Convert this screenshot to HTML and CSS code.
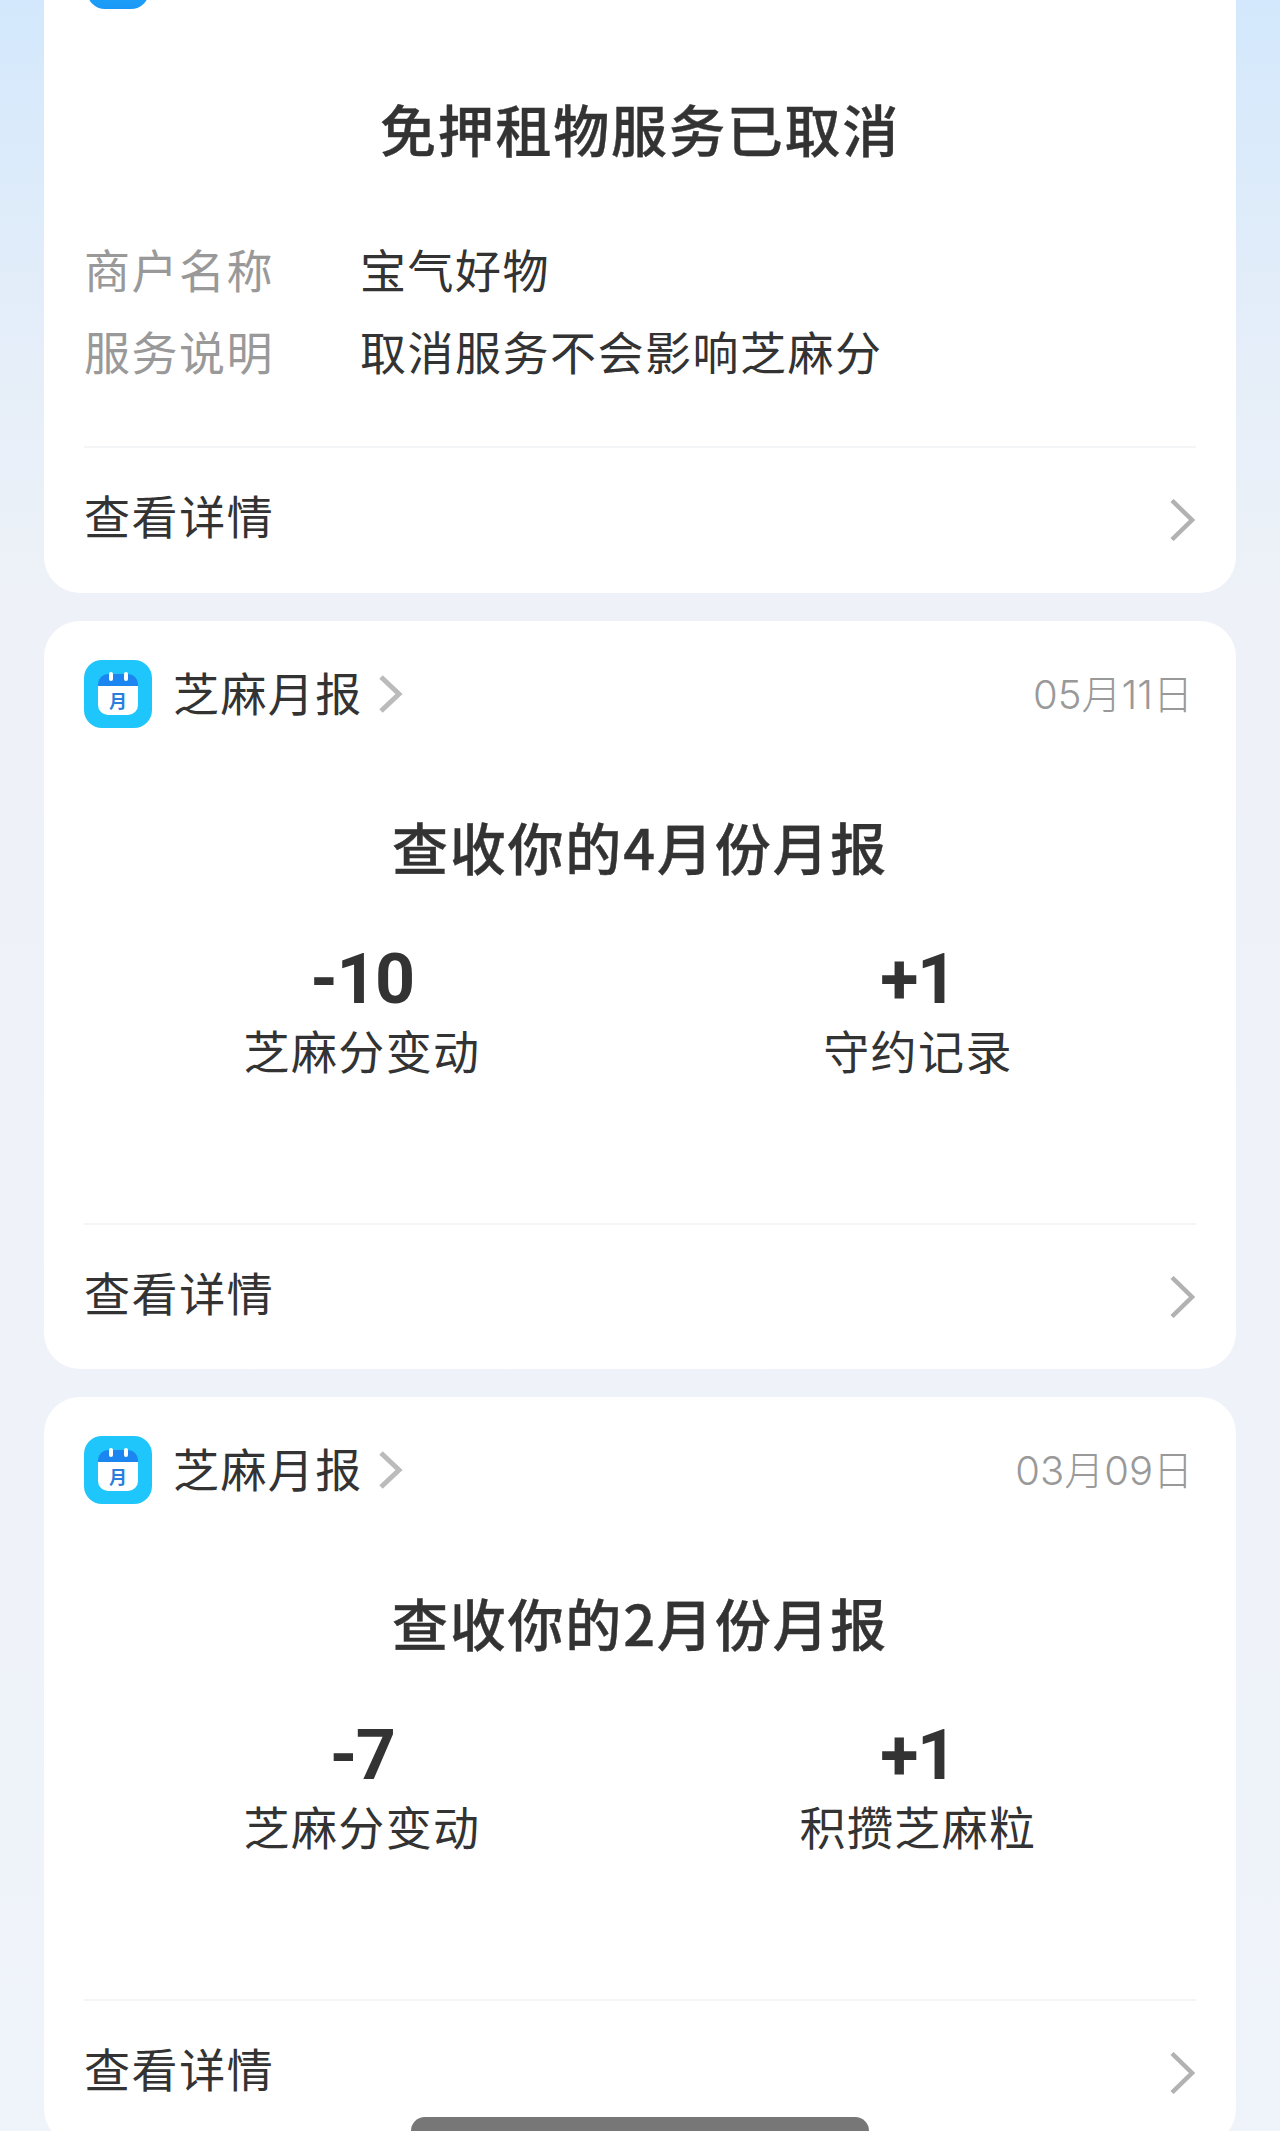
FILE: index.html
```
<!DOCTYPE html>
<html lang="zh-CN">
<head>
<meta charset="utf-8">
<title>芝麻信用</title>
<link rel="stylesheet" href="styles.css">
</head>
<body>
<main class="feed">
  <section class="card card-first">
    <header class="head"><div class="app-icon app-icon-top"></div></header>
    <h2 class="title title-first">免押租物服务已取消</h2>
    <dl class="info">
      <div class="info-row"><dt>商户名称</dt><dd>宝气好物</dd></div>
      <div class="info-row"><dt>服务说明</dt><dd>取消服务不会影响芝麻分</dd></div>
    </dl>
    <a class="detail"><span>查看详情</span>
      <svg class="chev" viewBox="0 0 26 42"><path d="M3 1.5 23 21 3 40.5"/></svg></a>
  </section>

  <section class="card">
    <header class="head">
      <svg class="app-icon" viewBox="0 0 68 68"><rect width="68" height="68" rx="18" fill="#1fc6fb"/><path d="M14 24a10 10 0 0 1 10-10h20a10 10 0 0 1 10 10v4H14z" fill="#1b86ef"/><path d="M14 26h40v19a10 10 0 0 1-10 10H24a10 10 0 0 1-10-10z" fill="#fff"/><rect x="25" y="12" width="4" height="9" rx="2" fill="#fff"/><rect x="40" y="12" width="4" height="9" rx="2" fill="#fff"/><text x="34" y="48" class="icon-glyph">月</text></svg>
      <span class="app-name">芝麻月报</span>
      <svg class="chev-small" viewBox="0 0 25 38"><path d="M3 2 21 19 3 36"/></svg>
      <time class="date">05月11日</time>
    </header>
    <h2 class="title">查收你的4月份月报</h2>
    <div class="metrics">
      <div class="metric"><b>-10</b><span>芝麻分变动</span></div>
      <div class="metric"><b>+1</b><span>守约记录</span></div>
    </div>
    <a class="detail"><span>查看详情</span>
      <svg class="chev" viewBox="0 0 26 42"><path d="M3 1.5 23 21 3 40.5"/></svg></a>
  </section>

  <section class="card">
    <header class="head">
      <svg class="app-icon" viewBox="0 0 68 68"><rect width="68" height="68" rx="18" fill="#1fc6fb"/><path d="M14 24a10 10 0 0 1 10-10h20a10 10 0 0 1 10 10v4H14z" fill="#1b86ef"/><path d="M14 26h40v19a10 10 0 0 1-10 10H24a10 10 0 0 1-10-10z" fill="#fff"/><rect x="25" y="12" width="4" height="9" rx="2" fill="#fff"/><rect x="40" y="12" width="4" height="9" rx="2" fill="#fff"/><text x="34" y="48" class="icon-glyph">月</text></svg>
      <span class="app-name">芝麻月报</span>
      <svg class="chev-small" viewBox="0 0 25 38"><path d="M3 2 21 19 3 36"/></svg>
      <time class="date">03月09日</time>
    </header>
    <h2 class="title">查收你的2月份月报</h2>
    <div class="metrics">
      <div class="metric"><b>-7</b><span>芝麻分变动</span></div>
      <div class="metric"><b>+1</b><span>积攒芝麻粒</span></div>
    </div>
    <a class="detail"><span>查看详情</span>
      <svg class="chev" viewBox="0 0 26 42"><path d="M3 1.5 23 21 3 40.5"/></svg></a>
  </section>
</main>
<div class="home-bar"></div>
</body>
</html>
```
FILE: styles.css
```
* { box-sizing: border-box; }
html, body { margin: 0; height: 2131px; overflow: hidden; }
body {
  position: relative;
  background: linear-gradient(180deg, #d3e8fc 0, #e3edf9 300px, #eef2f8 600px, #eff3fa 2131px);
  font-family: "Noto Sans CJK SC", "Noto Sans", sans-serif;
  color: #333;
}
.feed {
  margin-top: -98px;
  padding: 0 44px;
  display: flex;
  flex-direction: column;
  gap: 28px;
}
.card {
  background: #fff;
  border-radius: 36px;
  padding: 39px 40px 0;
}
.card-first { padding-bottom: 1px; }
.head { display: flex; align-items: center; height: 68px; }
.app-icon { width: 68px; height: 68px; flex: none; }
.app-icon-top {
  border-radius: 18px;
  background: linear-gradient(180deg, #1fc6fb, #1b98f7);
  width: 62px;
  margin-left: 3px;
}
.icon-glyph {
  font-size: 18px;
  font-weight: 700;
  fill: #2a7fdc;
  text-anchor: middle;
}
.app-name {
  margin: 0 0 7px 21px;
  font-size: 46px;
  line-height: 60px;
  letter-spacing: 1.4px;
}
.chev-small {
  width: 25px;
  height: 38px;
  margin-left: 15px;
  fill: none;
  stroke: #bbb;
  stroke-width: 5;
}
.date {
  margin: 2px 3px 0 auto;
  font-family: Inter, "Noto Sans CJK SC", sans-serif;
  font-weight: 300;
  font-size: 40px;
  line-height: 60px;
  color: #999;
}
.title {
  margin: 78px 0 58px;
  font-size: 56px;
  line-height: 80px;
  font-weight: 500;
  letter-spacing: 1.8px;
  text-align: center;
  -webkit-text-stroke: 0.4px #333;
}
.title-first { margin: 79px 0 0; }
.info { margin: 70px 0 66px; display: flex; flex-direction: column; gap: 22px; }
.info-row { display: flex; font-size: 46px; line-height: 60px; letter-spacing: 1.5px; }
.info-row dt { width: 276px; color: #999; }
.info-row dd { margin: 0; }
.metrics { display: grid; grid-template-columns: 1fr 1fr; height: 279px; }
.metric { display: flex; flex-direction: column; align-items: center; gap: 5px; }
.metric b {
  font-family: Roboto, sans-serif;
  font-size: 70px;
  line-height: 70px;
  font-weight: 700;
  letter-spacing: -1.5px;
}
.metric span { font-size: 46px; line-height: 60px; letter-spacing: 1.4px; }
.detail {
  display: flex;
  align-items: center;
  justify-content: space-between;
  height: 146px;
  border-top: 2px solid #f4f5f7;
  font-size: 46px;
  letter-spacing: 1.6px;
}
.detail span { margin-bottom: 12px; }
.chev {
  width: 26px;
  height: 42px;
  margin-right: 1px;
  fill: none;
  stroke: #b2b2b2;
  stroke-width: 4.5;
}
.home-bar {
  position: absolute;
  left: 411px;
  top: 2117px;
  width: 458px;
  height: 28px;
  border-radius: 14px;
  background: #777;
}
```
